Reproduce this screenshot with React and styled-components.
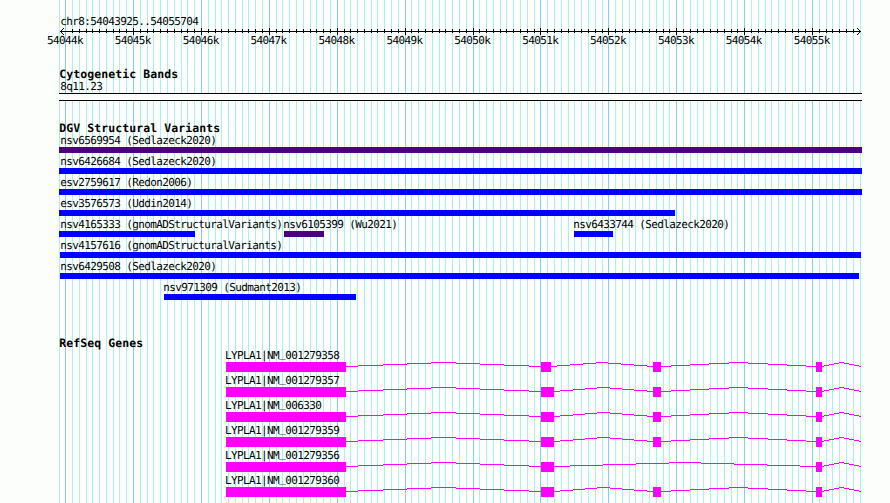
import React from "react";
import styled, { createGlobalStyle } from "styled-components";

const GlobalStyle = createGlobalStyle`
  body {
    margin: 0;
    background: #fcfefc;
    overflow: hidden;
  }
`;

const TICK_START = 65.631;
const TICK_STEP = 6.79;

const ticks = Array.from({ length: 118 }, (_, i) => ({
  x: Math.floor(TICK_START + i * TICK_STEP),
  major: i % 10 === 0,
}));

const Browser = styled.div`
  position: relative;
  box-sizing: border-box;
  width: 890px;
  height: 503px;
  padding-top: 16px;
  overflow: hidden;
  background: #fcfefc;
  color: #000;
  font-family: "DejaVu Sans Mono", "Liberation Mono", monospace;
  font-size: 11px;
  line-height: 12px;
  letter-spacing: -0.622px;
  text-rendering: geometricPrecision;
`;

const GridLines = styled.svg`
  position: absolute;
  top: 0;
  left: 0;
`;

const Tracks = styled.div`
  position: relative;
  display: flex;
  flex-direction: column;
`;

const Label = styled.div`
  height: 12px;
  margin-left: ${(props) => props.$indent || 0}px;
  white-space: pre;
`;

const Underscore = styled.span`
  line-height: 0;
  vertical-align: 2px;
`;

const Axis = styled.svg`
  display: block;
  height: 7px;
  margin-top: -1px;
  overflow: visible;
`;

const AxisLabels = styled.div`
  display: flex;
  height: 12px;
  margin: 1px 0 0 31px;
`;

const AxisLabel = styled.span`
  flex: 0 0 67.9px;
  text-align: center;
`;

const Track = styled.section`
  margin-top: ${(props) => props.$top}px;
`;

const Title = styled.h2`
  height: 12px;
  margin: 0 0 ${(props) => props.$gap || 0}px 59.3px;
  font-size: 11.5px;
  font-weight: bold;
  letter-spacing: 0.077px;
`;

const Band = styled.div`
  box-sizing: border-box;
  width: 803px;
  height: 8px;
  margin-left: 59px;
  border: solid #000;
  border-width: 1px 0;
  background: #fcfefc;
`;

const VariantRow = styled.div`
  display: flex;
  height: 21px;
`;

const Variant = styled.div`
  flex: none;
  width: ${(props) => props.$width}px;
  margin-left: ${(props) => props.$gap}px;
`;

const Bar = styled.div`
  height: 6px;
  background: ${(props) => props.$color};
`;

const Gene = styled.div`
  height: 24px;
  padding-top: 1px;
`;

const GeneModel = styled.svg`
  display: block;
`;

const BLUE = "#0000ff";
const INDIGO = "#4b0082";

const variants = [
  [{ name: "nsv6569954 (Sedlazeck2020)", start: 59, end: 862, color: INDIGO }],
  [{ name: "nsv6426684 (Sedlazeck2020)", start: 59, end: 862 }],
  [{ name: "esv2759617 (Redon2006)", start: 59, end: 862 }],
  [{ name: "esv3576573 (Uddin2014)", start: 59, end: 675 }],
  [
    { name: "nsv4165333 (gnomADStructuralVariants)", start: 59, end: 195 },
    { name: "nsv6105399 (Wu2021)", start: 284, end: 324, color: INDIGO },
    { name: "nsv6433744 (Sedlazeck2020)", start: 574, end: 613 },
  ],
  [{ name: "nsv4157616 (gnomADStructuralVariants)", start: 60, end: 861 }],
  [{ name: "nsv6429508 (Sedlazeck2020)", start: 60, end: 859 }],
  [{ name: "nsv971309 (Sudmant2013)", start: 164, end: 356 }],
];

const fullExons = [[226, 346], [541, 554], [653, 661], [816, 822]];

const genes = [
  { name: "LYPLA1|NM_001279358", exons: [[226, 346], [541, 551], [653, 661], [816, 822]] },
  { name: "LYPLA1|NM_001279357", exons: fullExons },
  { name: "LYPLA1|NM_006330", exons: fullExons },
  { name: "LYPLA1|NM_001279359", exons: fullExons },
  { name: "LYPLA1|NM_001279356", exons: [[226, 346], [541, 554], [816, 822]] },
  { name: "LYPLA1|NM_001279360", exons: fullExons },
];

// an intron climbs 4px to its middle and comes down again, one pixel at a time
const intronPath = (from, to) => {
  const step = (to - from) / 8;
  let d = "";
  for (let i = 0; i <= 8; i++) {
    const y = Math.abs(4 - i) + 0.5;
    const x1 = Math.round(from + Math.max(0, i - 0.5) * step);
    const x2 = Math.round(from + Math.min(8, i + 0.5) * step);
    d += `M${x1} ${y}H${x2}`;
  }
  return d;
};

const Ruler = () => (
  <>
    <Label $indent={60.3}>chr8:54043925..54055704</Label>
    <Axis width="890" height="7" shapeRendering="crispEdges">
      <rect x="60" y="4" width="801" height="1" />
      {/* the arrow heads take the place of the outermost ticks */}
      {ticks.slice(1, -1).map((t) => (
        <rect
          key={t.x}
          x={t.x}
          y={t.major ? 1 : 2}
          width="1"
          height={t.major ? 7 : 4}
        />
      ))}
      {[1, 2, 3].map((n) => (
        <path
          key={n}
          d={`M${60 + n} ${4 - n}h1v1h-1zM${60 + n} ${4 + n}h1v1h-1zM${860 - n} ${4 - n}h1v1h-1zM${860 - n} ${4 + n}h1v1h-1z`}
        />
      ))}
    </Axis>
    <AxisLabels>
      {Array.from({ length: 12 }, (_, i) => (
        <AxisLabel key={i}>{54044 + i}k</AxisLabel>
      ))}
    </AxisLabels>
  </>
);

const Variants = ({ items }) => (
  <VariantRow>
    {items.map((v, i) => (
      <Variant
        key={v.name}
        $gap={v.start - (i ? items[i - 1].end : 0)}
        $width={v.end - v.start}
      >
        <Label $indent={v.start === 59 ? 1.3 : v.start === 60 ? 0.3 : -0.7}>
          {v.name}
        </Label>
        <Bar $color={v.color || BLUE} />
      </Variant>
    ))}
  </VariantRow>
);

const Transcript = ({ name, exons }) => {
  const [prefix, accession] = name.split("_");
  return (
    <Gene>
      <Label $indent={225.1}>
        {prefix}
        <Underscore>_</Underscore>
        {accession}
      </Label>
      <GeneModel width="890" height="10" shapeRendering="crispEdges">
        {exons.map(([start, end], i) => (
          <React.Fragment key={start}>
            <path
              d={intronPath(end, exons[i + 1] ? exons[i + 1][0] : 861)}
              stroke="#ff00ff"
            />
            <rect x={start} y="0" width={end - start} height="10" fill="#ff00ff" />
          </React.Fragment>
        ))}
      </GeneModel>
    </Gene>
  );
};

const App = () => (
  <>
    <GlobalStyle />
    <Browser>
      <GridLines width="890" height="503" shapeRendering="crispEdges">
        <rect x="59" y="0" width="1" height="503" fill="#afeeee" />
        {ticks.map((t) => (
          <rect
            key={t.x}
            x={t.x}
            y="0"
            width="1"
            height="503"
            fill={t.major ? "#87ceeb" : "#afeeee"}
          />
        ))}
      </GridLines>
      <Tracks>
        <Ruler />
        <Track $top={21}>
          <Title $gap={1}>Cytogenetic Bands</Title>
          <Label $indent={60.3}>8q11.23</Label>
          <Band />
        </Track>
        <Track $top={21}>
          <Title $gap={1}>DGV Structural Variants</Title>
          {variants.map((items) => (
            <Variants key={items[0].name} items={items} />
          ))}
        </Track>
        <Track $top={34}>
          <Title>RefSeq Genes</Title>
          {genes.map((gene) => (
            <Transcript key={gene.name} {...gene} />
          ))}
        </Track>
      </Tracks>
    </Browser>
  </>
);

export default App;
